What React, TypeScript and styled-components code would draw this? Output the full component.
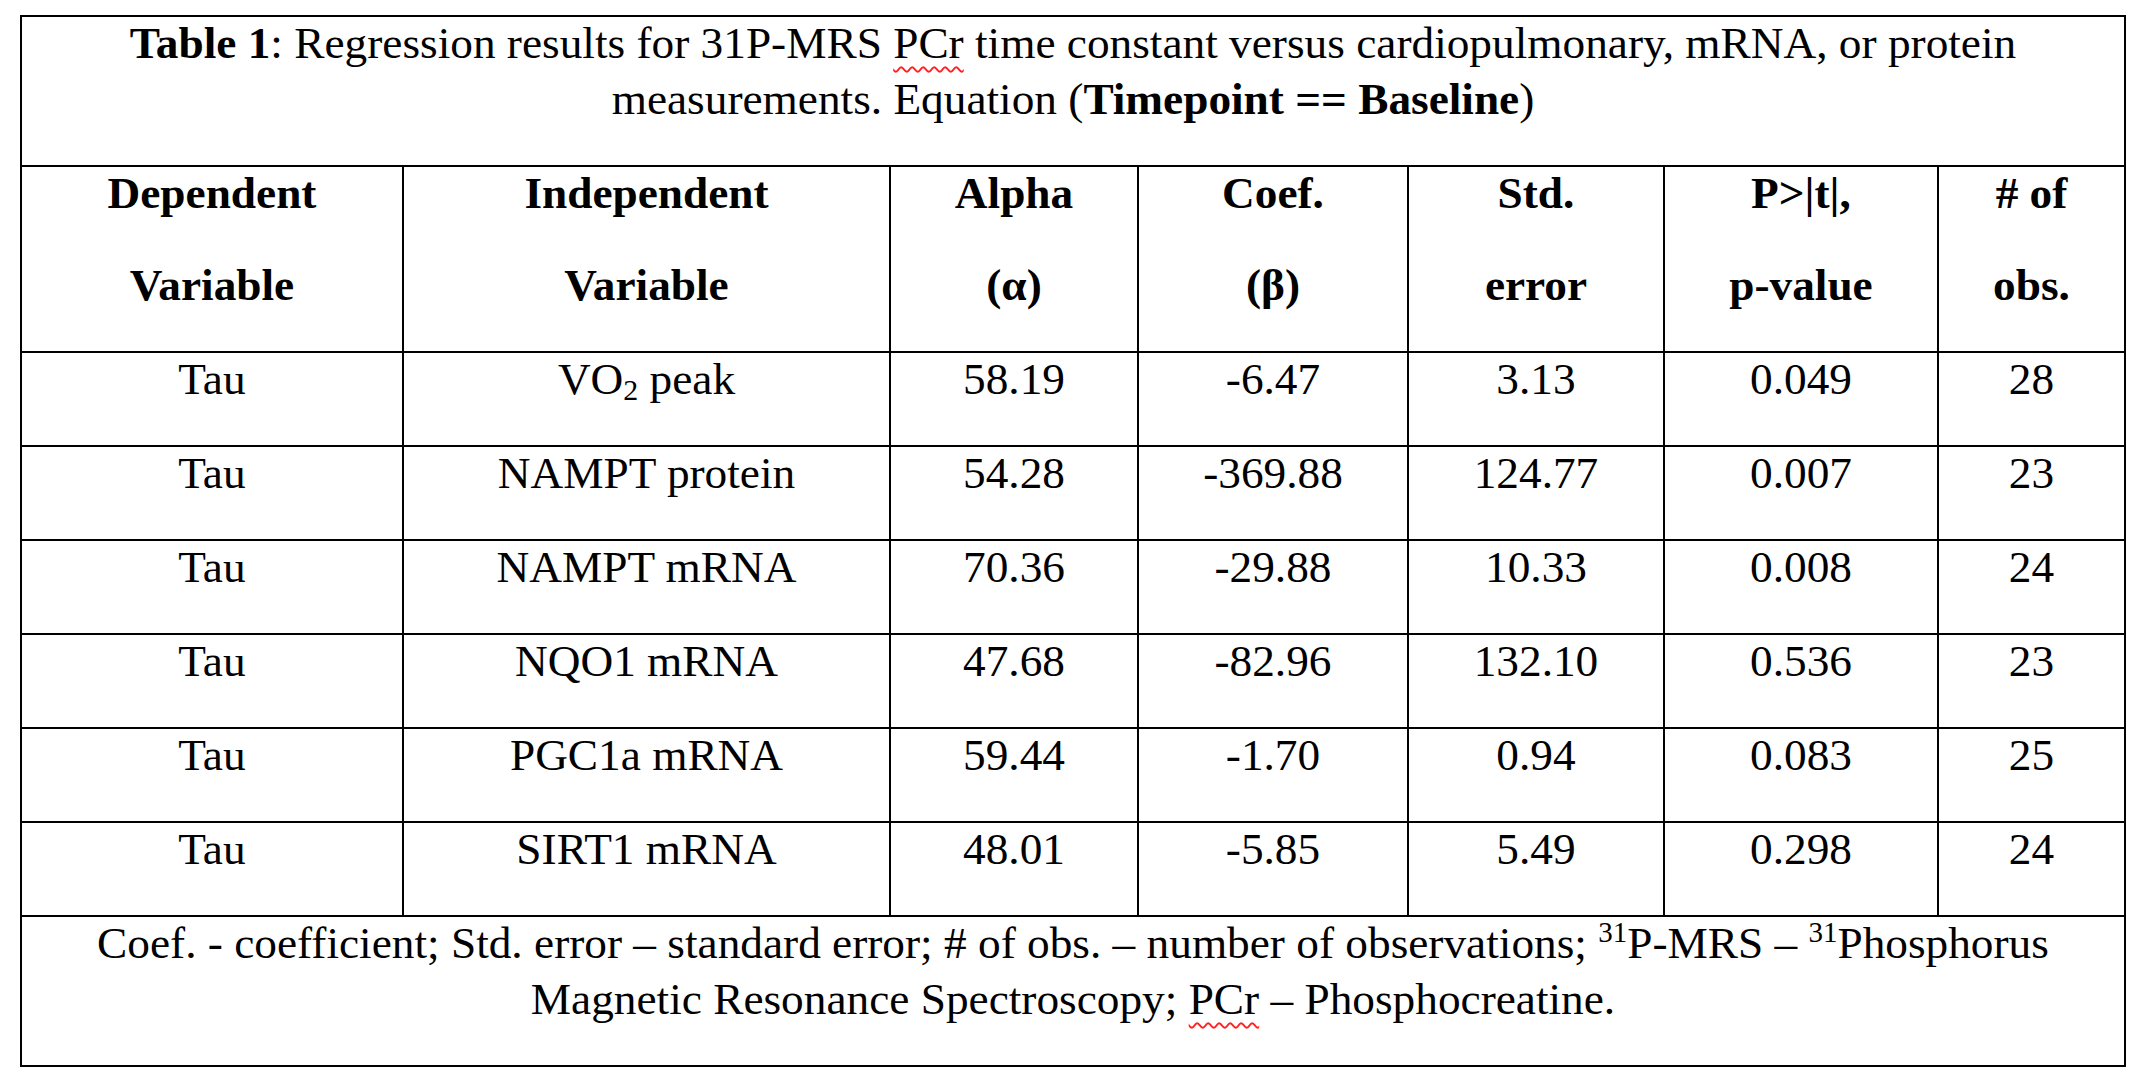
import React from "react";
import styled, { createGlobalStyle } from "styled-components";

const GlobalStyle = createGlobalStyle`
  html, body {
    margin: 0;
    padding: 0;
    background: #ffffff;
  }
  body {
    font-family: "Liberation Serif", "Times New Roman", serif;
    color: #000000;
  }
`;

const Page = styled.div`
  padding: 15px 0 0 20px;
  width: 2151px;
  height: 1088px;
  box-sizing: border-box;
  background: #ffffff;
`;

const Grid = styled.div`
  display: grid;
  grid-template-columns: 380px 485px 246px 268px 254px 272px 185px;
  grid-auto-rows: auto;
  gap: 2px;
  padding: 2px;
  background: #000000;
  width: 2106px;
  box-sizing: border-box;
  font-family: "Liberation Serif", "Times New Roman", serif;
  font-size: 45.3px;
`;

const Cell = styled.div<{ $span?: number; $bold?: boolean }>`
  background: #ffffff;
  grid-column: ${(p) => (p.$span ? `span ${p.$span}` : "auto")};
  font-weight: ${(p) => (p.$bold ? 700 : 400)};
  text-align: center;
  display: flex;
  flex-direction: column;
  align-items: stretch;
  padding: 0 10px;
`;

const Para = styled.p`
  margin: -2px 0 38px 0;
  line-height: 56px;
  white-space: nowrap;
`;

const Spell = styled.span`
  text-decoration-line: underline;
  text-decoration-style: wavy;
  text-decoration-color: #ff2020;
  text-decoration-thickness: 1.5px;
  text-underline-offset: 8px;
`;

const Sub = styled.sub`
  font-size: 0.66em;
  vertical-align: -0.2em;
  line-height: 0;
`;

const Sup = styled.sup`
  font-size: 0.64em;
  vertical-align: 0.55em;
  line-height: 0;
`;

type Row = [React.ReactNode, React.ReactNode, string, string, string, string, string];

const headers: [string, string][] = [
  ["Dependent", "Variable"],
  ["Independent", "Variable"],
  ["Alpha", "(α)"],
  ["Coef.", "(β)"],
  ["Std.", "error"],
  ["P>|t|,", "p-value"],
  ["# of", "obs."],
];

const rows: Row[] = [
  ["Tau", <>VO<Sub>2</Sub> peak</>, "58.19", "-6.47", "3.13", "0.049", "28"],
  ["Tau", "NAMPT protein", "54.28", "-369.88", "124.77", "0.007", "23"],
  ["Tau", "NAMPT mRNA", "70.36", "-29.88", "10.33", "0.008", "24"],
  ["Tau", "NQO1 mRNA", "47.68", "-82.96", "132.10", "0.536", "23"],
  ["Tau", "PGC1a mRNA", "59.44", "-1.70", "0.94", "0.083", "25"],
  ["Tau", "SIRT1 mRNA", "48.01", "-5.85", "5.49", "0.298", "24"],
];

export default function App() {
  return (
    <>
      <GlobalStyle />
      <Page>
        <Grid>
          <Cell $span={7}>
            <Para>
              <b>Table 1</b>: Regression results for 31P-MRS <Spell>PCr</Spell> time constant versus
              cardiopulmonary, mRNA, or protein
              <br />
              measurements. Equation (<b>Timepoint == Baseline</b>)
            </Para>
          </Cell>
          {headers.map(([a, b], i) => (
            <Cell key={`h${i}`} $bold>
              <Para>{a}</Para>
              <Para>{b}</Para>
            </Cell>
          ))}
          {rows.map((r, ri) =>
            r.map((v, ci) => (
              <Cell key={`r${ri}c${ci}`}>
                <Para>{v}</Para>
              </Cell>
            ))
          )}
          <Cell $span={7}>
            <Para>
              Coef. - coefficient; Std. error – standard error; # of obs. – number of observations;{" "}
              <Sup>31</Sup>P-MRS – <Sup>31</Sup>Phosphorus
              <br />
              Magnetic Resonance Spectroscopy; <Spell>PCr</Spell> – Phosphocreatine.
            </Para>
          </Cell>
        </Grid>
      </Page>
    </>
  );
}
